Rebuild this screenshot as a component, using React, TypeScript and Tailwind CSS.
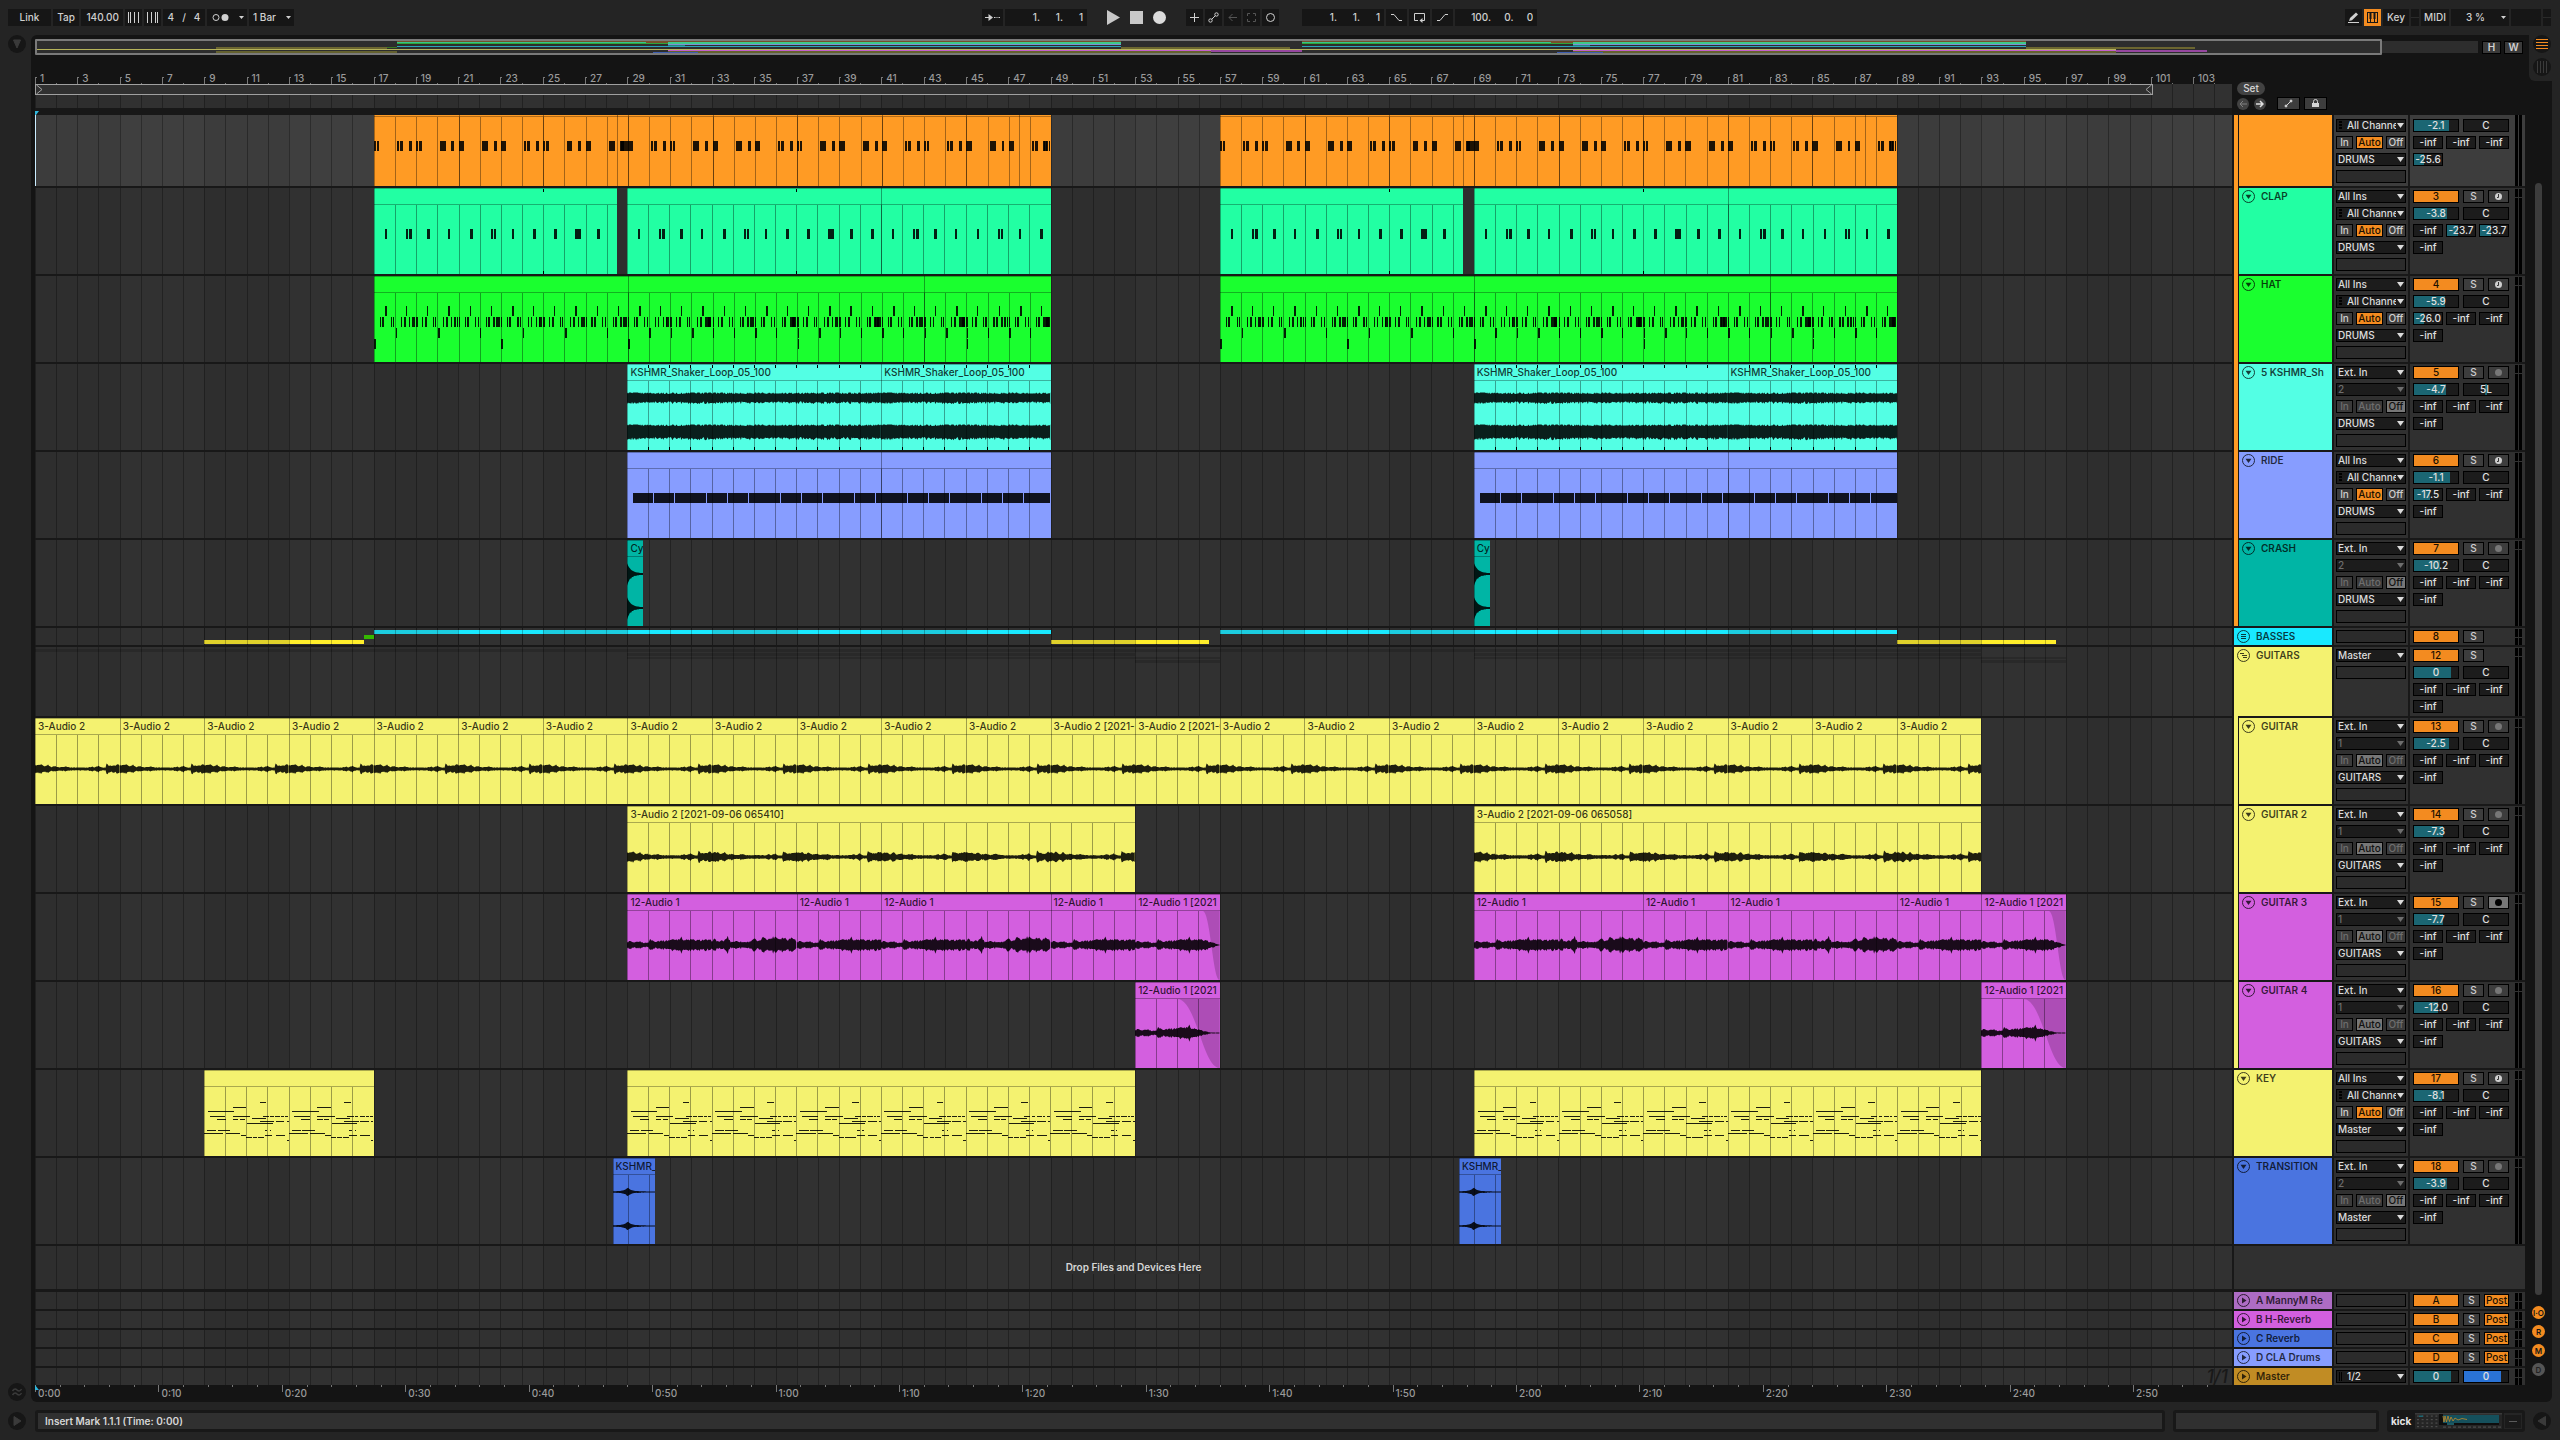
import React from "react";

/* ---------- timeline scale ---------- */

const TOTAL_BARS = 103.84;
const OVERVIEW_BARS = 108;
const UNIT = 21;
const pct = (bar: number, total = TOTAL_BARS) => `${((bar - 1) / total) * 100}%`;
const span = (bars: number, total = TOTAL_BARS) => `${(bars / total) * 100}%`;
const range = (from: number, to: number, step = 1) => {
  const out: number[] = [];
  for (let v = from; v < to; v += step) out.push(v);
  return out;
};
const noise = (i: number) => {
  const v = Math.sin(i * 127.1 + 311.7) * 43758.5453;
  return v - Math.floor(v);
};

/* ---------- wave shapes ---------- */

type Amp = (bar: number, i: number) => number;

function wavePath(from: number, to: number, center: number, amp: Amp) {
  const n = Math.round((to - from) * UNIT);
  const top: string[] = [];
  const bottom: string[] = [];
  for (let i = 0; i <= n; i++) {
    const a = amp(from + i / UNIT, i);
    top.push(`${i},${(center - a).toFixed(1)}`);
    bottom.unshift(`${i},${(center + a * (0.8 + noise(i + 9) * 0.3)).toFixed(1)}`);
  }
  return `M${top.join("L")}L${bottom.join("L")}Z`;
}

function sample(points: number[][], p: number) {
  for (let k = 1; k < points.length; k++) {
    if (p <= points[k][0]) {
      const [x0, y0] = points[k - 1];
      const [x1, y1] = points[k];
      return y0 + ((y1 - y0) * (p - x0)) / (x1 - x0);
    }
  }
  return points[points.length - 1][1];
}

const PLUCK = [
  [0, 5.5], [0.1, 4], [0.25, 3.2], [0.4, 3], [0.55, 4.2], [0.75, 3.6], [0.95, 4.2], [1.1, 2.2],
  [1.25, 4.2], [1.4, 2], [1.6, 2.8], [1.8, 1.6], [2.1, 2.6], [2.3, 1.5], [3.2, 1.5], [3.35, 2.6],
  [3.45, 1.4], [3.65, 3], [3.8, 1.4], [3.95, 1.4], [4, 1],
];
const pluck = (gain: number): Amp => (bar, i) =>
  sample(PLUCK, (((bar - 4.35) % 4) + 4) % 4) * gain * (0.85 + noise(i) * 0.3);

const STRUM = [
  [0, 3], [0.15, 4.5], [0.3, 2.4], [0.6, 4], [0.8, 2.4], [1, 2.6], [1.1, 6.5], [1.3, 4], [1.6, 5],
  [1.8, 4.6], [2.1, 6], [2.4, 6.5], [2.55, 8.5], [2.7, 5.5], [3, 6], [3.3, 5], [3.6, 5.8], [4, 5],
  [4.15, 6.4], [4.3, 4], [4.6, 4.8], [4.75, 9.5], [4.9, 3.4], [5.2, 4.4], [5.5, 3.2], [5.8, 3.6],
  [6, 7.5], [6.2, 3.6], [6.5, 9.5], [6.65, 6], [7, 9.5], [7.2, 7], [7.4, 8.5], [7.6, 6], [7.8, 8.5], [8, 7],
];
const strum = (origin: number, fadeFrom = 999, fadeTo = 1000): Amp => (bar, i) => {
  const fade = bar < fadeFrom ? 1 : Math.max(0.08, 1 - (bar - fadeFrom) / (fadeTo - fadeFrom));
  return sample(STRUM, (bar - origin) % 8) * (0.75 + noise(i) * 0.4) * fade * 0.92;
};

const shaker = (base: number): Amp => (_b, i) => base + (noise(i) > 0.6 ? 1.6 : noise(i * 3) * 0.8);
const crash: Amp = (bar) => {
  const p = (((bar - 1) % 4) + 4) % 4;
  return 0.8 + 10 * Math.exp(-p * 5.5);
};
const sweep: Amp = (bar) => {
  const p = (bar - 1) % 4;
  const d = p > 2 ? p - 4 : p;
  return 0.5 + Math.exp(-Math.abs(d) * 2.5) * 1.2 + Math.exp(-Math.abs(d) * 9) * 3;
};

/* ---------- note patterns: [start bar, length in bars, y, height] ---------- */

type Note = [number, number, number, number];

function kickNotes(from: number, to: number): Note[] {
  const out: Note[] = [];
  for (const b of range(from, to, 2)) {
    out.push([b, 0.1, 41, 10], [b + 0.12, 0.13, 41, 10]);
    out.push([b + 1.1, 0.1, 41, 10], [b + 1.22, 0.16, 41, 10]);
    out.push([b + 1.66, 0.14, 41, 10]);
  }
  out.push([from + 11.65, 0.24, 41, 10], [from + 11.92, 0.1, 41, 10]);
  out.push([to - 0.38, 0.1, 41, 10], [to - 0.24, 0.1, 41, 10], [to - 0.1, 0.06, 41, 10]);
  return out;
}

function clapNotes(from: number, to: number): Note[] {
  const out: Note[] = [];
  for (const b of range(from, to)) {
    if (b + 0.5 > to) continue;
    if ((b - 18) % 4 === 0) out.push([b + 0.52, 0.11, 41, 10], [b + 0.66, 0.13, 41, 10]);
    else out.push([b + 0.52, b % 3 === 2 ? 0.08 : 0.14, 41, 10]);
  }
  return out;
}

function hatNotes(from: number, to: number): Note[] {
  const out: Note[] = [];
  const tick = (x: number, y: number, w = 0.05) => {
    if (x < to) out.push([x, w, y, 10]);
  };
  for (const b of range(from, to)) {
    const k = b - from;
    tick(b + 0.52, 30, k % 3 ? 0.05 : 0.09);
    [0.28, 0.4, 0.78, 0.9].forEach((o) => tick(b + o, 41, o === 0.4 ? 0.09 : 0.05));
    if (k % 2 === 1) [0.64, 0.82, 1].forEach((o) => tick(b + o, 41, 0.07));
    if (k % 4 === 3 && k > 12) tick(b + 0.7, 41, 0.22);
    if (k % 2 === 1 || k > 12) tick(b + 0.02, 52, k % 3 ? 0.05 : 0.1);
    if (k === 0 || k === 6 || k === 12 || k === 20 || k === 28) tick(b + 0.02, 63, 0.06);
  }
  return out;
}

const rideNotes = (from: number, to: number): Note[] =>
  range(from + 0.26, to, 0.5).map((b) => [b, Math.min(0.48, to - b), 41, 10] as Note);

const KEY_PHRASE: Note[] = [
  [0.17, 1.27, 41, 1], [0.27, 0.74, 46, 1], [0.6, 0.42, 49, 1], [1.35, 0.65, 37, 1], [1.35, 0.84, 46, 1],
  [1.35, 0.27, 49, 1], [1.69, 0.23, 49, 1], [2.04, 1.2, 53, 1], [2.26, 0.65, 48, 1], [2.64, 0.31, 32, 1],
  [2.77, 0.3, 46, 1], [3.12, 0.18, 46, 1], [3.36, 0.25, 46, 1], [3.66, 0.12, 46, 1], [3.83, 0.15, 46, 1],
  [2.64, 0.67, 51, 1], [3.38, 0.42, 51, 1], [3.9, 0.1, 51, 1], [0.15, 0.44, 60, 1], [0.65, 0.6, 60, 1],
  [0, 0.92, 63, 1], [1.02, 0.7, 63, 1], [1.73, 0.27, 65, 1], [2, 0.25, 67, 1], [2.3, 0.22, 67, 1],
  [2.56, 0.28, 67, 1], [2.87, 0.13, 60, 1], [3.12, 0.06, 60, 1], [2.87, 0.36, 65, 1], [3.38, 0.46, 65, 1],
  [3.9, 0.1, 70, 1],
];
const keyNotes = (from: number, to: number): Note[] =>
  range(from, to, 4).flatMap((b) => KEY_PHRASE.map(([x, w, y, h]) => [b + x, w, y, h] as Note));

/* ---------- clips ---------- */

type Clip = {
  from: number;
  to: number;
  color: string;
  label?: string;
  seams?: number[];
  notes?: Note[];
  waves?: [number, Amp][];
  ticks?: number[];
  fadeFrom?: number;
};

function ClipBlock({ clip }: { clip: Clip }) {
  const { from, to, color, label, seams = [], notes = [], waves = [], ticks = [], fadeFrom } = clip;
  const len = to - from;
  const inner = (bar: number) => `${((bar - from) / len) * 100}%`;
  return (
    <div
      className={`absolute bottom-0 h-[86px] overflow-hidden ${color}`}
      style={{ left: pct(from), width: span(len) }}
    >
      <div className="h-[17px] overflow-hidden border-y border-black/30 pl-[3px] text-[10px] leading-[15px] whitespace-nowrap text-black/80">
        {label}
      </div>
      <svg className="absolute inset-0 h-full w-full" shapeRendering="crispEdges" aria-hidden="true">
        <rect x="0" y="0" width="1" height="100%" fillOpacity="0.35" />
        {range(Math.floor(from) + 1, to).map((b) => (
          <rect key={b} x={inner(b)} y="17" width="1" height="69" fillOpacity="0.36" />
        ))}
        {seams.map((b) => (
          <rect key={b} x={inner(b)} y="0" width="1" height="86" fillOpacity="0.36" />
        ))}
        {ticks.map((b) => (
          <g key={b}>
            <rect x={inner(b)} y="1" width="1" height="3" />
            <rect x={inner(b)} y="83" width="1" height="3" />
          </g>
        ))}
      </svg>
      <svg
        className="absolute inset-0 h-full w-full"
        viewBox={`0 0 ${len * UNIT} 86`}
        preserveAspectRatio="none"
        aria-hidden="true"
      >
        {fadeFrom && (
          <path
            d={`M${(fadeFrom - from) * UNIT},17C${(fadeFrom - from + (to - fadeFrom) * 0.45) * UNIT},17 ${(fadeFrom - from + (to - fadeFrom) * 0.6) * UNIT},86 ${len * UNIT},86V17Z`}
            fillOpacity="0.18"
          />
        )}
        <g shapeRendering="crispEdges" fillOpacity="0.88">
          {notes.map(([x, w, y, h], i) => (
            <rect key={i} x={(x - from) * UNIT} y={y} width={w * UNIT} height={h} />
          ))}
        </g>
        {waves.map(([center, amp], i) => (
          <path key={i} d={wavePath(from, to, center, amp)} fillOpacity="0.88" />
        ))}
      </svg>
    </div>
  );
}

const ORANGE = "bg-[#ff9b24]";
const MINT = "bg-[#22ffa3]";
const GREEN = "bg-[#1aff2f]";
const AQUA = "bg-[#53ffe4]";
const LAVENDER = "bg-[#879dff]";
const TEAL = "bg-[#00b5a5]";
const CYAN = "bg-[#19e9ff]";
const YELLOW = "bg-[#f4f270]";
const MAGENTA = "bg-[#d35fdf]";
const BLUE = "bg-[#4a74e0]";

const OFFSETS = [0, 40];

const kick: Clip[] = OFFSETS.map((o) => ({
  from: 17 + o, to: 49 + o, color: ORANGE, seams: [...range(21 + o, 49 + o, 4), 28.5 + o, 47.5 + o], notes: kickNotes(17 + o, 49 + o),
}));
const clap: Clip[] = OFFSETS.flatMap((o) => [
  { from: 17 + o, to: 28.5 + o, color: MINT, notes: clapNotes(17, 28.5).map(([x, ...r]) => [x + o, ...r] as Note), ticks: [25 + o] },
  { from: 29 + o, to: 49 + o, color: MINT, seams: [41 + o], notes: clapNotes(29, 49).map(([x, ...r]) => [x + o, ...r] as Note), ticks: [37 + o] },
]);
const hat: Clip[] = OFFSETS.map((o) => ({
  from: 17 + o, to: 49 + o, color: GREEN, seams: [29 + o, 43 + o], notes: hatNotes(17 + o, 49 + o),
}));
const shakers: Clip[] = OFFSETS.flatMap((o) =>
  [[29, 41], [41, 49]].map(([a, b]) => ({
    from: a + o, to: b + o, color: AQUA, label: "KSHMR_Shaker_Loop_05_100", ticks: range(a + 1 + o, b + o),
    waves: [[34, shaker(4)], [68, shaker(6)]] as [number, Amp][],
  })),
);
const ride: Clip[] = OFFSETS.map((o) => ({
  from: 29 + o, to: 49 + o, color: LAVENDER, seams: [41 + o], notes: rideNotes(29 + o, 49 + o),
}));
const crashes: Clip[] = OFFSETS.map((o) => ({
  from: 29 + o, to: 29.75 + o, color: TEAL, label: "Cy", waves: [[34, crash], [68, crash]],
}));
const guitar: Clip[] = range(1, 93, 4).map((b) => ({
  from: b, to: b + 4, color: YELLOW, label: b === 49 || b === 53 ? "3-Audio 2 [2021-0" : "3-Audio 2", waves: [[51, pluck(1)]],
}));
const guitar2: Clip[] = OFFSETS.map((o) => ({
  from: 29 + o, to: 53 + o, color: YELLOW, label: o ? "3-Audio 2 [2021-09-06 065058]" : "3-Audio 2 [2021-09-06 065410]", waves: [[51, pluck(1.15)]],
}));
const guitar3: Clip[] = OFFSETS.flatMap((o) =>
  [[29, 37], [37, 41], [41, 49], [49, 53], [53, 57]].map(([a, b]) => ({
    from: a + o, to: b + o, color: MAGENTA, label: a === 53 ? "12-Audio 1 [2021" : "12-Audio 1",
    fadeFrom: a === 53 ? 56.2 + o : undefined,
    waves: [[51, strum(a + o, a === 53 ? 56.3 + o : 999, a === 53 ? 57 + o : 1000)]] as [number, Amp][],
  })),
);
const guitar4: Clip[] = OFFSETS.map((o) => ({
  from: 53 + o, to: 57 + o, color: MAGENTA, label: "12-Audio 1 [2021", fadeFrom: 55 + o, waves: [[51, strum(53 + o, 55.6 + o, 56.7 + o)]],
}));
const key: Clip[] = [[9, 17], [29, 53], [69, 93]].map(([a, b]) => ({
  from: a, to: b, color: YELLOW, notes: keyNotes(a, b),
}));
const transition: Clip[] = OFFSETS.map((o) => ({
  from: 28.3 + o, to: 30.3 + o, color: BLUE, label: "KSHMR_", waves: [[34, sweep], [68, sweep]],
}));

/* ---------- lanes ---------- */

function BarGrid() {
  return (
    <div className="absolute inset-0 overflow-hidden">
      {range(5, 104, 8).map((b) => (
        <div key={b} className="absolute inset-y-0 bg-white/[0.015]" style={{ left: pct(b), width: span(4) }} />
      ))}
      {range(1, 105).map((b) => (
        <div key={b} className="absolute inset-y-0 w-px bg-black/30" style={{ left: pct(b) }} />
      ))}
    </div>
  );
}

function Lane({ height, clips = [], selected, children }: { height: string; clips?: Clip[]; selected?: boolean; children?: React.ReactNode }) {
  return (
    <div className={`relative overflow-hidden ${height} ${selected ? "bg-[#3c3c3c]" : "bg-[#2e2e2e]"}`}>
      <BarGrid />
      {clips.map((c) => (
        <ClipBlock key={c.from} clip={c} />
      ))}
      {children}
    </div>
  );
}

const BASS_PARTS: [number, number, string][] = [
  [9, 16.55, "top-[12px] bg-[#ffee2b]"],
  [16.55, 17, "top-[7px] bg-[#35b800]"],
  [17, 49, "top-[2px] bg-[#19e9ff]"],
  [49, 56.5, "top-[12px] bg-[#ffee2b]"],
  [57, 89, "top-[2px] bg-[#19e9ff]"],
  [89, 96.5, "top-[12px] bg-[#ffee2b]"],
];

function BassLane() {
  return (
    <Lane height="h-[17px]">
      {BASS_PARTS.map(([a, b, cls]) => (
        <div key={a} className={`absolute h-1 ${cls}`} style={{ left: pct(a), width: span(b - a) }} />
      ))}
      {range(9, 97, 8).map((b) => (
        <div key={b} className="absolute inset-y-0 bg-[#2e2e2e]/15" style={{ left: pct(b), width: span(4) }} />
      ))}
      {range(9, 97).map((b) => (
        <div key={b} className="absolute inset-y-0 w-px bg-black/25" style={{ left: pct(b) }} />
      ))}
    </Lane>
  );
}

const GROUP_SHADES: [number, number, string][] = [
  [1, 93, "top-[2px] h-[3px]"],
  [29, 53, "top-[6px] h-[3px]"],
  [69, 93, "top-[6px] h-[3px]"],
  [29, 57, "top-[10px] h-[2px]"],
  [69, 97, "top-[10px] h-[2px]"],
  [53, 57, "top-[13px] h-[3px]"],
  [93, 97, "top-[13px] h-[3px]"],
];

function Lanes() {
  return (
    <div className="flex flex-col gap-0.5 bg-[#181818]">
      <Lane height="h-[71px]" clips={kick} selected>
        <div className="absolute inset-y-0 left-0 w-px bg-[#c9ecff]" />
      </Lane>
      <Lane height="h-[86px]" clips={clap} />
      <Lane height="h-[86px]" clips={hat} />
      <Lane height="h-[86px]" clips={shakers} />
      <Lane height="h-[86px]" clips={ride} />
      <Lane height="h-[86px]" clips={crashes} />
      <BassLane />
      <Lane height="h-[69px]">
        {GROUP_SHADES.map(([a, b, cls], i) => (
          <div key={i} className={`absolute bg-black/15 ${cls}`} style={{ left: pct(a), width: span(b - a) }} />
        ))}
      </Lane>
      <Lane height="h-[86px]" clips={guitar} />
      <Lane height="h-[86px]" clips={guitar2} />
      <Lane height="h-[86px]" clips={guitar3} />
      <Lane height="h-[86px]" clips={guitar4} />
      <Lane height="h-[86px]" clips={key} />
      <Lane height="h-[86px]" clips={transition} />
      <Lane height="h-[43px]">
        <div className="relative flex h-full items-center justify-center">
          <span className="bg-[#2e2e2e] font-semibold text-[#d6d6d6]">Drop Files and Devices Here</span>
        </div>
      </Lane>
      <div className="mt-px flex flex-col gap-0.5">
        {[0, 1, 2, 3].map((i) => (
          <Lane key={i} height="h-[17px]" />
        ))}
        <Lane height="h-[17px]">
          <span className="absolute right-1 bottom-0 text-[18px] leading-[17px] font-medium text-[#191919] italic">1/1</span>
        </Lane>
      </div>
    </div>
  );
}

function TimeRuler() {
  const barsPerSecond = 140 / 240;
  return (
    <div className="relative h-[17px] overflow-hidden text-[#9a9a9a]">
      {range(0, 178, 2).map((s) => {
        const major = s % 10 === 0;
        return (
          <div key={s} className="absolute top-0 flex" style={{ left: pct(1 + s * barsPerSecond) }}>
            <div className={`w-px bg-[#777] ${major ? "h-[7px]" : "h-0.5"}`} />
            {major && (
              <span className="pt-px pl-0.5 leading-[15px]">
                {Math.floor(s / 60)}:{String(s % 60).padStart(2, "0")}
              </span>
            )}
          </div>
        );
      })}
      <svg className="absolute top-0 left-0 h-[5px] w-1" viewBox="0 0 4 5" fill="#2fb6dc" aria-hidden="true">
        <path d="M0 0L4 5H0Z" />
      </svg>
    </div>
  );
}

function BarRuler() {
  return (
    <div className="min-w-0 flex-1">
      <div className="relative h-[29px] overflow-hidden text-[#9a9a9a]">
        {range(1, 105).map((b) => (
          <div key={b} className="absolute bottom-0 flex h-[7px] items-end" style={{ left: pct(b) }}>
            {b % 2 === 1 ? (
              <>
                <div className="h-[7px] w-0.5 border-t border-l border-[#777]" />
                <span className="pl-[3px] leading-[12px]">{b}</span>
              </>
            ) : (
              <div className="h-px w-px bg-[#777]" />
            )}
          </div>
        ))}
      </div>
      <div className="relative h-6 bg-[#2e2e2e]">
        <BarGrid />
        <div
          className="absolute top-0 left-0 flex h-[11px] items-center justify-between border border-[#a0a0a0] bg-[#303030]"
          style={{ width: span(100.1) }}
        >
          <svg className="h-[9px] w-[7px]" viewBox="0 0 7 9" fill="none" stroke="#a0a0a0" aria-hidden="true">
            <path d="M0.5 0L6 4.5L0.5 9" />
          </svg>
          <svg className="h-[9px] w-[7px]" viewBox="0 0 7 9" fill="none" stroke="#a0a0a0" aria-hidden="true">
            <path d="M6.5 0L1 4.5L6.5 9" />
          </svg>
        </div>
      </div>
      <div className="flex h-[7px] items-end bg-[#181818]">
        <svg className="h-1 w-1" viewBox="0 0 4 4" fill="#2fb6dc" aria-hidden="true">
          <path d="M0 0H4L1 4H0Z" />
        </svg>
      </div>
    </div>
  );
}

/* ---------- overview ---------- */

const OVERVIEW: [number, number, number, number, string][] = [
  [9, 16.55, 6, 2, "#6c6630"], [9, 17, 10, 2, "#64612f"], [16.55, 17, 6, 1, "#3b7a22"],
  [1, 93, 8, 1, "#b5b35a"],
  ...OFFSETS.flatMap((o): [number, number, number, number, string][] => [
    [17 + o, 49 + o, 0, 1, "#77502a"], [17 + o, 28.5 + o, 1, 1, "#35c48b"], [17 + o, 49 + o, 2, 1, "#2fa53a"],
    [28 + o, 29 + o, 1, 1, "#77502a"], [29 + o, 49 + o, 1, 2, "#3fc98a"], [29 + o, 49 + o, 3, 1, "#7b8fd6"],
    [17 + o, 49 + o, 5, 1, "#2aa3b8"], [29 + o, 29.75 + o, 4, 1, "#23857c"],
    [49 + o, 56.5 + o, 6, 2, "#6c6630"],
    [29 + o, 53 + o, 9, 1, "#c25fcb"], [29 + o, 53 + o, 10, 2, "#64612f"], [53 + o, 57 + o, 9, 2, "#96479f"],
    [28.3 + o, 30.3 + o, 11, 1, "#3f5eb0"],
  ]),
];

function Overview() {
  return (
    <div className="relative h-4 min-w-0 flex-1">
      <div className="absolute inset-x-0 inset-y-0.5 bg-[#2d2d2d]">
        <svg className="h-full w-full" shapeRendering="crispEdges" aria-hidden="true">
          {OVERVIEW.map(([a, b, y, h, c], i) => (
            <rect key={i} x={pct(a, OVERVIEW_BARS)} y={y} width={span(b - a, OVERVIEW_BARS)} height={h} fill={c} />
          ))}
        </svg>
      </div>
      <div
        className="absolute inset-y-0 left-0 rounded-[1px] border-2 border-[#7a7a7a]"
        style={{ width: span(103.76, OVERVIEW_BARS) }}
      />
    </div>
  );
}

/* ---------- track controls ---------- */

function Pick({ value, label, dim, inset, bars }: { value: string; label: string; dim?: boolean; inset?: boolean; bars?: boolean }) {
  return (
    <div className="relative h-[13px] w-[70px]">
      <select
        aria-label={label}
        className={`block h-[13px] w-full appearance-none border border-black bg-[#1c1c1c] pr-[9px] text-[10px] leading-[11px] font-medium outline-none ${inset ? "pl-2.5" : "pl-px"} ${dim ? "text-[#6e6e6e]" : "text-[#dcdcdc]"}`}
      >
        <option>{value}</option>
      </select>
      <svg className={`pointer-events-none absolute top-1 right-0.5 h-[5px] w-[7px] ${dim ? "fill-[#6e6e6e]" : "fill-[#dcdcdc]"}`} viewBox="0 0 7 5" aria-hidden="true">
        <path d="M0 0H7L3.5 5Z" />
      </svg>
      {inset && (
        <svg className="pointer-events-none absolute top-0.5 left-[3px] h-[9px] w-[3px]" viewBox="0 0 3 9" fill="none" stroke="#000" aria-hidden="true">
          {bars ? <path d="M0.5 0V9M2.5 0V9" /> : <path d="M1.5 0V9" strokeWidth="3" strokeDasharray="2 1" />}
        </svg>
      )}
    </div>
  );
}

const Blank = () => <div className="h-[13px] w-[70px] border border-black bg-[#2b2b2b]" />;

function Level({ value, label, fill = 0, width, center, fillColor = "bg-[#1b6673]" }: { value: string; label: string; fill?: number; width: string; center?: boolean; fillColor?: string }) {
  return (
    <div className={`relative h-[13px] border border-black bg-[#1c1c1c] ${width}`}>
      {fill > 0 && <div className={`absolute inset-y-0 left-0 ${fillColor}`} style={{ width: `${fill * 100}%` }} />}
      {center && <div className="absolute inset-y-0 left-1/2 w-0.5 -translate-x-1/2 bg-[#1b6673]" />}
      <input
        aria-label={label}
        defaultValue={value}
        className="relative block h-[11px] w-full bg-transparent p-0 text-center text-[10px] leading-[11px] font-medium text-[#e0e0e0] outline-none"
      />
    </div>
  );
}

function Toggle({ text, width, look }: { text: string; width: string; look: string }) {
  return (
    <button type="button" className={`flex h-[13px] items-center justify-center overflow-hidden border border-black leading-[11px] ${width} ${look}`}>
      {text}
    </button>
  );
}

const ON = "bg-[#f38b20] text-[#1a1000]";
const OFF = "bg-[#3d3d3d] text-[#cfcfcf]";
const DIM = "bg-[#3a3a3a] text-[#6e6e6e]";
const DIM_ON = "bg-[#777] text-[#111]";

type Track = {
  name: string;
  color: string;
  num: string;
  input: string;
  midi?: boolean;
  channel?: string;
  monitor?: "Auto" | "Off";
  out: string;
  vol: string;
  fill: number;
  pan?: string;
  sends: [string, number][];
  armed?: boolean;
};

const inf: [string, number] = ["-inf", 0];

const DRUM_TRACKS: Track[] = [
  { name: "", color: ORANGE, num: "2", input: "All Ins", midi: true, out: "DRUMS", vol: "-2.1", fill: 0.79, sends: [inf, inf, inf, ["-25.6", 0.34]] },
  { name: "CLAP", color: MINT, num: "3", input: "All Ins", midi: true, out: "DRUMS", vol: "-3.8", fill: 0.75, sends: [inf, ["-23.7", 0.4], ["-23.7", 0.4], inf] },
  { name: "HAT", color: GREEN, num: "4", input: "All Ins", midi: true, out: "DRUMS", vol: "-5.9", fill: 0.7, sends: [["-26.0", 0.34], inf, inf, inf] },
  { name: "5 KSHMR_Sh", color: AQUA, num: "5", input: "Ext. In", channel: "2", monitor: "Off", out: "DRUMS", vol: "-4.7", fill: 0.73, pan: "5L", sends: [inf, inf, inf, inf] },
  { name: "RIDE", color: LAVENDER, num: "6", input: "All Ins", midi: true, out: "DRUMS", vol: "-1.1", fill: 0.82, sends: [["-17.5", 0.56], inf, inf, inf] },
  { name: "CRASH", color: TEAL, num: "7", input: "Ext. In", channel: "2", monitor: "Off", out: "DRUMS", vol: "-10.2", fill: 0.59, sends: [inf, inf, inf, inf] },
];
const GUITAR_TRACKS: Track[] = [
  { name: "GUITAR", color: YELLOW, num: "13", input: "Ext. In", channel: "1", monitor: "Auto", out: "GUITARS", vol: "-2.5", fill: 0.79, sends: [inf, inf, inf, inf] },
  { name: "GUITAR 2", color: YELLOW, num: "14", input: "Ext. In", channel: "1", monitor: "Auto", out: "GUITARS", vol: "-7.3", fill: 0.66, sends: [inf, inf, inf, inf] },
  { name: "GUITAR 3", color: MAGENTA, num: "15", input: "Ext. In", channel: "1", monitor: "Auto", out: "GUITARS", vol: "-7.7", fill: 0.66, sends: [inf, inf, inf, inf], armed: true },
  { name: "GUITAR 4", color: MAGENTA, num: "16", input: "Ext. In", channel: "1", monitor: "Auto", out: "GUITARS", vol: "-12.0", fill: 0.54, sends: [inf, inf, inf, inf] },
];
const LOOSE_TRACKS: Track[] = [
  { name: "KEY", color: YELLOW, num: "17", input: "All Ins", midi: true, out: "Master", vol: "-8.1", fill: 0.64, sends: [inf, inf, inf, inf] },
  { name: "TRANSITION", color: BLUE, num: "18", input: "Ext. In", channel: "2", monitor: "Off", out: "Master", vol: "-3.9", fill: 0.75, sends: [inf, inf, inf, inf] },
];

function FoldIcon({ kind }: { kind: "down" | "right" | "list" | "group" }) {
  return (
    <svg className="h-[13px] w-[13px] shrink-0 opacity-75" viewBox="0 0 13 13" fill="none" stroke="#000" aria-hidden="true">
      <circle cx="6.5" cy="6.5" r="6" />
      {kind === "down" && <path d="M3.5 4.8H9.5L6.5 9Z" fill="#000" stroke="none" />}
      {kind === "right" && <path d="M5 3.5V9.5L9.5 6.5Z" fill="#000" stroke="none" />}
      {kind === "list" && <path d="M4 4.5H9M4 6.5H9M4 8.5H9" />}
      {kind === "group" && <path d="M3 4.5H7M5 6.5H10M6 8.5H10" />}
    </svg>
  );
}

function Name({ name, color, kind }: { name: string; color: string; kind: "down" | "right" | "list" | "group" }) {
  return (
    <div className={`flex min-w-0 flex-1 items-start gap-1.5 overflow-hidden pt-0.5 pl-[3px] text-black/75 ${color}`}>
      <button type="button" aria-label={`Fold ${name}`} className="shrink-0">
        <FoldIcon kind={kind} />
      </button>
      <span className="leading-[13px] font-semibold whitespace-nowrap">{name}</span>
    </div>
  );
}

function Meter() {
  return (
    <div className="relative mt-px flex w-[7px] shrink-0 gap-px self-stretch">
      <div className="flex-1 bg-black" />
      <div className="flex-1 bg-black" />
      <div className="absolute inset-x-0 top-2 h-px bg-[#333]" />
    </div>
  );
}

function Record({ midi, armed }: { midi?: boolean; armed?: boolean }) {
  return (
    <button type="button" aria-label="Arm" className={`flex h-[13px] w-[21px] items-center justify-center border border-black ${armed ? "bg-[#777]" : "bg-[#3d3d3d]"}`}>
      <svg className="h-[7px] w-[7px]" viewBox="0 0 7 7" aria-hidden="true">
        <circle cx="3.5" cy="3.5" r="3.5" fill={armed ? "#000" : midi ? "#cfcfcf" : "#777"} />
        {midi && <path d="M3.5 1V4.500H2" fill="none" stroke="#333" />}
      </svg>
    </button>
  );
}

function Cells({ io, mixer, lit }: { io: React.ReactNode; mixer: React.ReactNode; lit?: boolean }) {
  const bg = lit ? "bg-[#3d3d3d]" : "bg-[#303030]";
  return (
    <>
      <div className={`ml-0.5 flex w-[74px] shrink-0 flex-col items-start gap-1 overflow-hidden pt-0.5 pl-0.5 ${bg}`}>{io}</div>
      <div className={`ml-0.5 flex w-[115px] shrink-0 justify-between overflow-hidden pr-[3px] pl-[3px] ${bg}`}>
        <div className="flex flex-col items-start gap-1 pt-0.5">{mixer}</div>
        <Meter />
      </div>
    </>
  );
}

function Sends({ sends }: { sends: [string, number][] }) {
  return (
    <div className="flex w-[96px] flex-wrap gap-x-[3px] gap-y-1">
      {sends.map(([v, f], i) => (
        <Level key={i} value={v} fill={f} label={`Send ${"ABCD"[i]}`} width="w-[30px]" />
      ))}
    </div>
  );
}

function TrackRow({ track: t, lit }: { track: Track; lit?: boolean }) {
  const dim = !t.midi;
  const look = (m: string) => (dim ? (t.monitor === m ? DIM_ON : DIM) : m === "Auto" ? ON : OFF);
  return (
    <div className="flex h-[86px] shrink-0">
      <Name name={t.name} color={t.color} kind="down" />
      <Cells
        lit={lit}
        io={
          <>
            <Pick value={t.input} label={`${t.name} input`} />
            <Pick value={t.midi ? "All Channels" : (t.channel ?? "")} label={`${t.name} channel`} dim={dim} inset={t.midi} />
            <div className="flex w-[70px] justify-between">
              <Toggle text="In" width="w-[17px]" look={look("In")} />
              <Toggle text="Auto" width="w-[27px]" look={look("Auto")} />
              <Toggle text="Off" width="w-5" look={look("Off")} />
            </div>
            <Pick value={t.out} label={`${t.name} output`} />
            <Blank />
          </>
        }
        mixer={
          <>
            <div className="flex gap-1">
              <Toggle text={t.num} width="w-[46px]" look={ON} />
              <Toggle text="S" width="w-[21px]" look={OFF} />
              <Record midi={t.midi} armed={t.armed} />
            </div>
            <div className="flex gap-1">
              <Level value={t.vol} fill={t.fill} label={`${t.name} volume`} width="w-[46px]" />
              <Level value={t.pan ?? "C"} label={`${t.name} pan`} width="w-[46px]" center={!!t.pan} />
            </div>
            <Sends sends={t.sends} />
          </>
        }
      />
    </div>
  );
}

const RETURNS = [
  { letter: "A", name: "A MannyM Re", color: "bg-[#ad6cc4]" },
  { letter: "B", name: "B H-Reverb", color: MAGENTA },
  { letter: "C", name: "C Reverb", color: BLUE },
  { letter: "D", name: "D CLA Drums", color: LAVENDER },
];

function TrackPanel() {
  return (
    <div className="flex w-[293px] shrink-0 flex-col gap-0.5 bg-[#181818] pl-0.5">
      <div className="flex gap-px">
        <div className={`w-1 shrink-0 ${ORANGE}`} />
        <div className="flex min-w-0 flex-1 flex-col gap-0.5">
          {DRUM_TRACKS.map((t, i) =>
            i === 0 ? (
              <div key={t.num} className="flex h-[71px] flex-col justify-end overflow-hidden">
                <TrackRow track={t} lit />
              </div>
            ) : (
              <TrackRow key={t.num} track={t} />
            ),
          )}
        </div>
      </div>
      <div className="flex h-[17px]">
        <Name name="BASSES" color={CYAN} kind="list" />
        <Cells
          io={<Blank />}
          mixer={
            <div className="flex gap-1">
              <Toggle text="8" width="w-[46px]" look={ON} />
              <Toggle text="S" width="w-[21px]" look={OFF} />
            </div>
          }
        />
      </div>
      <div>
        <div className="flex h-[69px]">
          <Name name="GUITARS" color={YELLOW} kind="group" />
          <Cells
            io={
              <>
                <Pick value="Master" label="GUITARS output" />
                <Blank />
              </>
            }
            mixer={
              <>
                <div className="flex gap-1">
                  <Toggle text="12" width="w-[46px]" look={ON} />
                  <Toggle text="S" width="w-[21px]" look={OFF} />
                </div>
                <div className="flex gap-1">
                  <Level value="0" fill={0.84} label="GUITARS volume" width="w-[46px]" />
                  <Level value="C" label="GUITARS pan" width="w-[46px]" />
                </div>
                <Sends sends={[inf, inf, inf, inf]} />
              </>
            }
          />
        </div>
        <div className="flex gap-px">
          <div className={`w-1 shrink-0 ${YELLOW}`} />
          <div className="flex min-w-0 flex-1 flex-col gap-0.5 pt-0.5">
            {GUITAR_TRACKS.map((t) => (
              <TrackRow key={t.num} track={t} />
            ))}
          </div>
        </div>
      </div>
      {LOOSE_TRACKS.map((t) => (
        <TrackRow key={t.num} track={t} />
      ))}
      <div className="h-[43px] bg-[#303030]" />
      <div className="mt-px flex flex-col gap-0.5">
        {RETURNS.map((r) => (
          <div key={r.letter} className="flex h-[17px]">
            <Name name={r.name} color={r.color} kind="right" />
            <Cells
              io={<Blank />}
              mixer={
                <div className="flex gap-1">
                  <Toggle text={r.letter} width="w-[46px]" look={ON} />
                  <Toggle text="S" width="w-[17px]" look={OFF} />
                  <Toggle text="Post" width="w-[25px]" look={ON} />
                </div>
              }
            />
          </div>
        ))}
        <div className="flex h-[17px]">
          <Name name="Master" color="bg-[#c18c24]" kind="right" />
          <Cells
            io={<Pick value="1/2" label="Master output" inset bars />}
            mixer={
              <div className="flex gap-1">
                <Level value="0" fill={0.84} label="Master volume" width="w-[46px]" />
                <Level value="0" fill={0.84} label="Cue volume" width="w-[46px]" fillColor="bg-[#2a73d6]" />
              </div>
            }
          />
        </div>
      </div>
    </div>
  );
}

/* ---------- transport ---------- */

function Cell({ width, children, look = "bg-[#161616] text-[#d0d0d0]", label }: { width: string; children?: React.ReactNode; look?: string; label?: string }) {
  return (
    <button type="button" aria-label={label} className={`flex h-[17px] items-center justify-center whitespace-pre ${width} ${look}`}>
      {children}
    </button>
  );
}

function Field({ width, value, label }: { width: string; value: string; label: string }) {
  return (
    <input
      aria-label={label}
      defaultValue={value}
      className={`h-[17px] bg-[#161616] p-0 pr-1 text-right text-[10px] leading-[17px] font-medium text-[#d0d0d0] outline-none ${width}`}
    />
  );
}

function Glyph({ d, w = 13, dim, children }: { d?: string; w?: number; dim?: boolean; children?: React.ReactNode }) {
  return (
    <svg width={w} height="13" viewBox={`0 0 ${w} 13`} fill="none" stroke={dim ? "#555" : "#d0d0d0"} aria-hidden="true">
      {d && <path d={d} />}
      {children}
    </svg>
  );
}

const Caret = () => (
  <svg width="5" height="3" viewBox="0 0 5 3" fill="#d0d0d0" aria-hidden="true">
    <path d="M0 0H5L2.5 3Z" />
  </svg>
);

function Transport() {
  return (
    <header className="grid h-[35px] grid-cols-[49fr_auto_51fr] items-center pr-[9px] pl-2">
      <div className="flex gap-0.5">
        <Cell width="w-[43px]">Link</Cell>
        <Cell width="w-[26px]">Tap</Cell>
        <Field width="w-[42px]" value="140.00" label="Tempo" />
        <Cell width="w-[17px]" label="Nudge down">
          <Glyph w={11} d="M0.5 1V12M2.5 1V12M6.5 1V12M10.5 1V12" />
        </Cell>
        <Cell width="w-[17px]" label="Nudge up">
          <Glyph w={11} d="M0.5 1V12M4.5 1V12M8.5 1V12M10.5 1V12" />
        </Cell>
        <Cell width="w-[42px]">{"4   /   4"}</Cell>
        <button type="button" aria-label="Metronome" className="flex h-[17px] w-10 items-center justify-between bg-[#161616] pr-[3px] pl-[5px]">
          <Glyph w={17}>
            <circle cx="4" cy="6.5" r="3" />
            <circle cx="13" cy="6.5" r="3.5" fill="#d0d0d0" stroke="none" />
          </Glyph>
          <Caret />
        </button>
        <div className="relative flex h-[17px] w-[45px] items-center">
          <select aria-label="Quantization" className="h-[17px] w-full appearance-none bg-[#161616] pl-1 text-[10px] font-medium text-[#d0d0d0] outline-none">
            <option>1 Bar</option>
          </select>
          <div className="pointer-events-none absolute right-[3px]">
            <Caret />
          </div>
        </div>
      </div>

      <div className="flex items-center gap-0.5">
        <Cell width="w-[21px]" label="Follow">
          <Glyph w={15} d="M0 6.5H5M9 6.5H10.5M11.5 6.5H12.5M13.5 6.5H15">
            <path d="M3.5 3L8 6.5L3.5 10Z" fill="#d0d0d0" stroke="none" />
          </Glyph>
        </Cell>
        <Field width="w-[82px]" value="1.      1.      1" label="Position" />
        <div className="flex items-center gap-2.5 px-[18px]">
          <button type="button" aria-label="Play">
            <svg width="13" height="15" viewBox="0 0 13 15" fill="#c8c8c8" aria-hidden="true"><path d="M0 0L13 7.5L0 15Z" /></svg>
          </button>
          <button type="button" aria-label="Stop" className="h-[13px] w-[13px] bg-[#c8c8c8]" />
          <button type="button" aria-label="Record" className="h-[13px] w-[13px] rounded-full bg-[#dcdcdc]" />
        </div>
        <Cell width="w-[17px]" label="Overdub"><Glyph d="M6.5 2V11M2 6.5H11" /></Cell>
        <Cell width="w-[17px]" label="Automation arm">
          <Glyph d="M4.6 8.4L8.4 4.6">
            <circle cx="3.5" cy="9.5" r="1.7" />
            <circle cx="9.5" cy="3.5" r="1.7" />
          </Glyph>
        </Cell>
        <Cell width="w-[17px]" label="Re-enable automation"><Glyph dim d="M3 6.5H11M6.5 3L3 6.5L6.5 10" /></Cell>
        <Cell width="w-[17px]" label="Capture"><Glyph dim d="M2.5 5V2.5H5M8 2.5H10.5V5M10.5 8V10.5H8M5 10.5H2.5V8" /></Cell>
        <Cell width="w-[17px]" label="Session record"><Glyph><circle cx="6.5" cy="6.5" r="4" /></Glyph></Cell>
        <div className="w-[19px]" />
        <Field width="w-[82px]" value="1.      1.      1" label="Loop start" />
        <Cell width="w-[21px]" label="Punch in"><Glyph d="M1 3.5H4L9 9.5H12" /></Cell>
        <Cell width="w-[21px]" label="Loop">
          <Glyph d="M5 9.5H1.5V2.5H11.5V9.5H9">
            <path d="M9.5 7V12L6.5 9.5Z" fill="#d0d0d0" stroke="none" />
          </Glyph>
        </Cell>
        <Cell width="w-[21px]" label="Punch out"><Glyph d="M1 9.5H4L9 3.5H12" /></Cell>
        <Field width="w-[82px]" value="100.     0.     0" label="Loop length" />
      </div>

      <div className="flex justify-end gap-0.5">
        <Cell width="w-[17px]" label="Draw mode">
          <Glyph d="M1 11.500H12">
            <path d="M2 10L3 7L9 1.5L11 3.5L5 9.2Z" fill="#d0d0d0" stroke="none" />
          </Glyph>
        </Cell>
        <Cell width="w-[17px]" look="bg-[#f38b20]" label="Computer keyboard">
          <svg width="13" height="13" viewBox="0 0 13 13" fill="none" stroke="#161616" aria-hidden="true">
            <rect x="1.5" y="1.5" width="10" height="10" />
            <path d="M4.5 7.5V11M8.5 7.5V11" />
            <path d="M4.5 2V8M8.5 2V8" strokeWidth="2" />
          </svg>
        </Cell>
        <Cell width="w-[26px]">Key</Cell>
        <div className="h-[17px] w-2 bg-[#161616] pt-2"><div className="h-px bg-[#2a2a2a]" /></div>
        <Cell width="w-7">MIDI</Cell>
        <button type="button" className="flex h-[17px] w-[58px] items-center justify-between bg-[#161616] pr-[3px] pl-[15px]">
          3 %
          <Caret />
        </button>
        <div className="h-[17px] w-[30px] bg-[#161616]" />
        <div className="h-[17px] w-2 bg-[#161616] pt-2"><div className="h-px bg-[#2a2a2a]" /></div>
      </div>
    </header>
  );
}

function Round({ label, children }: { label: string; children: React.ReactNode }) {
  return (
    <button type="button" aria-label={label} className="flex h-[18px] w-[18px] shrink-0 items-center justify-center rounded-full bg-[#161616]">
      <svg width="12" height="12" viewBox="0 0 12 12" fill="none" stroke="#3a3a3a" aria-hidden="true">
        {children}
      </svg>
    </button>
  );
}

function SetTools() {
  return (
    <div className="flex w-[297px] shrink-0 flex-col items-start gap-0.5 pt-[27px] pl-[5px]">
      <button type="button" className="h-[13px] w-7 rounded-full bg-[#424242] leading-[13px] text-[#d6d6d6]">Set</button>
      <div className="flex h-[13px] items-center">
        <button type="button" aria-label="Previous locator" className="flex h-3 w-3 items-center justify-center rounded-full bg-[#424242]">
          <svg width="8" height="8" viewBox="0 0 8 8" fill="none" stroke="#808080" aria-hidden="true"><path d="M8 4H1M4 1L1 4L4 7" /></svg>
        </button>
        <button type="button" aria-label="Next locator" className="ml-[5px] flex h-3 w-3 items-center justify-center rounded-full bg-[#424242]">
          <svg width="8" height="8" viewBox="0 0 8 8" fill="none" stroke="#e0e0e0" strokeWidth="1.5" aria-hidden="true"><path d="M0 4H7M4 1L7 4L4 7" /></svg>
        </button>
        <button type="button" aria-label="Automation mode" className="ml-[11px] flex h-[13px] w-[23px] items-center justify-center border border-black bg-[#3d3d3d]">
          <svg width="9" height="9" viewBox="0 0 9 9" fill="#d6d6d6" stroke="#d6d6d6" aria-hidden="true"><path d="M2 7L7 2" /><circle cx="2" cy="7" r="1" /><circle cx="7" cy="2" r="1" /></svg>
        </button>
        <button type="button" aria-label="Lock envelopes" className="ml-1 flex h-[13px] w-[23px] items-center justify-center border border-black bg-[#3d3d3d]">
          <svg width="9" height="9" viewBox="0 0 9 9" fill="none" stroke="#d6d6d6" aria-hidden="true"><path d="M2.5 4V2.5A2 2 0 0 1 6.5 2.5V4" /><rect x="1" y="4" width="7" height="4" fill="#d6d6d6" stroke="none" /></svg>
        </button>
      </div>
    </div>
  );
}

function SideTab({ text, off }: { text: string; off?: boolean }) {
  return (
    <button type="button" className={`flex h-[13px] w-[13px] items-center justify-center rounded-full text-[8px] leading-none font-semibold ${off ? "bg-[#555] text-[#222]" : "bg-[#f38b20] text-[#161616]"}`}>
      {text}
    </button>
  );
}

function DeviceThumb() {
  return (
    <svg className="h-4 w-[107px]" viewBox="0 0 107 16" aria-hidden="true">
      <rect width="107" height="16" fill="#252525" />
      <rect width="87" height="1.5" fill="#3a3a3a" />
      {range(0, 5).flatMap((x) => range(0, 4).map((y) => <rect key={`${x}-${y}`} x={2 + x * 4.6} y={2.5 + y * 3.5} width="2" height="1.2" fill="#4c4c4c" />))}
      <rect x="4" y="2.5" width="4" height="1.5" fill="#1b6673" />
      <rect x="24" y="1" width="4" height="11" fill="#0e0e0e" />
      <rect x="28" y="2" width="56" height="8" fill="#15505c" />
      <path d="M28 3L29 9L30 3L31.500 9L33 3L34.500 8.500L36 4L38 8L40 5L43 7L47 5.500L52 6.500" fill="none" stroke="#c48a2a" strokeWidth="0.8" />
      <rect x="28" y="10" width="56" height="2" fill="#0e0e0e" />
      <rect x="32" y="10.500" width="7" height="1" fill="#2aa3b8" />
      {range(28, 84, 5).map((x) => <rect key={x} x={x} y="13.500" width="3" height="1.2" fill="#4c4c4c" />)}
      <rect x="87" width="2" height="16" fill="#1a1a1a" />
      <rect x="90" y="2" width="16" height="13" fill="#1a1a1a" />
      <path d="M94 8.500H102" stroke="#777" strokeWidth="0.7" />
    </svg>
  );
}

export default function App() {
  return (
    <div className="flex min-h-screen flex-col bg-[#242424] font-['Inter',sans-serif] text-[10px] leading-[13px] font-medium text-[#d0d0d0]">
      <Transport />

      <main className="flex flex-1">
        <div className="flex w-[31px] shrink-0 flex-col justify-between pb-px pl-2">
          <Round label="Show browser"><path d="M2.500 2H9.500L6 10Z" fill="#3a3a3a" /></Round>
          <Round label="Groove pool">
            <path d="M1.500 5C3.500 2 5 3 6 4S9 6 10.500 3M1.500 9C3.500 6 5 7 6 8S9 10 10.500 7" strokeWidth="1.500" />
          </Round>
        </div>

        <div className="flex min-w-0 flex-1 flex-col rounded-md bg-[#141414] pl-1">
          <div className="flex">
            <div className="min-w-0 flex-1">
              <div className="flex items-center gap-1 pt-1 pr-1.5">
                <Overview />
                <div className="flex gap-[3px]">
                  <button type="button" className="h-[13px] w-[19px] border border-black bg-[#3a3a3a] leading-[11px] font-semibold">H</button>
                  <button type="button" className="h-[13px] w-[19px] border border-black bg-[#3a3a3a] leading-[11px] font-semibold">W</button>
                </div>
              </div>
              <div className="flex">
                <BarRuler />
                <SetTools />
              </div>
            </div>
            <div className="flex h-[46px] w-[23px] shrink-0 flex-col gap-[5px] rounded-bl-md bg-[#242424] pl-1">
              <Round label="Arrangement view">
                <path d="M0 1.500H12M0 4.500H12M0 7.500H12M0 10.500H12" stroke="#f38b20" shapeRendering="crispEdges" />
              </Round>
              <Round label="Session view"><path d="M1.500 0V12M4.500 0V12M7.500 0V12M10.500 0V12" shapeRendering="crispEdges" /></Round>
            </div>
          </div>

          <div className="flex flex-1">
            <div className="min-w-0 flex-1">
              <Lanes />
              <TimeRuler />
            </div>
            <div>
              <TrackPanel />
            </div>
            <div className="flex w-[27px] shrink-0 flex-col pt-[68px] pb-[26px] pl-[7px]">
              <div className="mb-[11px] ml-[3px] w-[7px] flex-1 rounded-full bg-[#3d3d3d]" />
              <div className="flex flex-col gap-1.5">
                <SideTab text="I·O" />
                <SideTab text="R" />
                <SideTab text="M" />
                <SideTab text="D" off />
              </div>
            </div>
          </div>
        </div>
        <div className="w-2 shrink-0" />
      </main>

      <footer className="flex h-[38px] items-center gap-2 pr-[9px] pl-2">
        <Round label="Show help"><path d="M3 1.500V10.500L10 6Z" fill="#3a3a3a" /></Round>
        <div className="ml-px flex h-[22px] min-w-0 flex-1 items-center rounded-[3px] border-[3px] border-[#181818] bg-[#303030] pl-[7px] font-semibold text-[#d6d6d6]">
          Insert Mark 1.1.1 (Time: 0:00)
        </div>
        <div className="h-[22px] w-[206px] rounded-[3px] border-[3px] border-[#181818] bg-[#303030]" />
        <div className="flex h-[22px] w-[138px] items-center justify-between rounded-[3px] bg-[#181818] pr-[3px] pl-1 text-[#e6e6e6]">
          <span className="font-bold">kick</span>
          <DeviceThumb />
        </div>
        <Round label="Show devices"><path d="M9.500 1.500V10.500L2 6Z" fill="#3a3a3a" /></Round>
      </footer>
    </div>
  );
}
